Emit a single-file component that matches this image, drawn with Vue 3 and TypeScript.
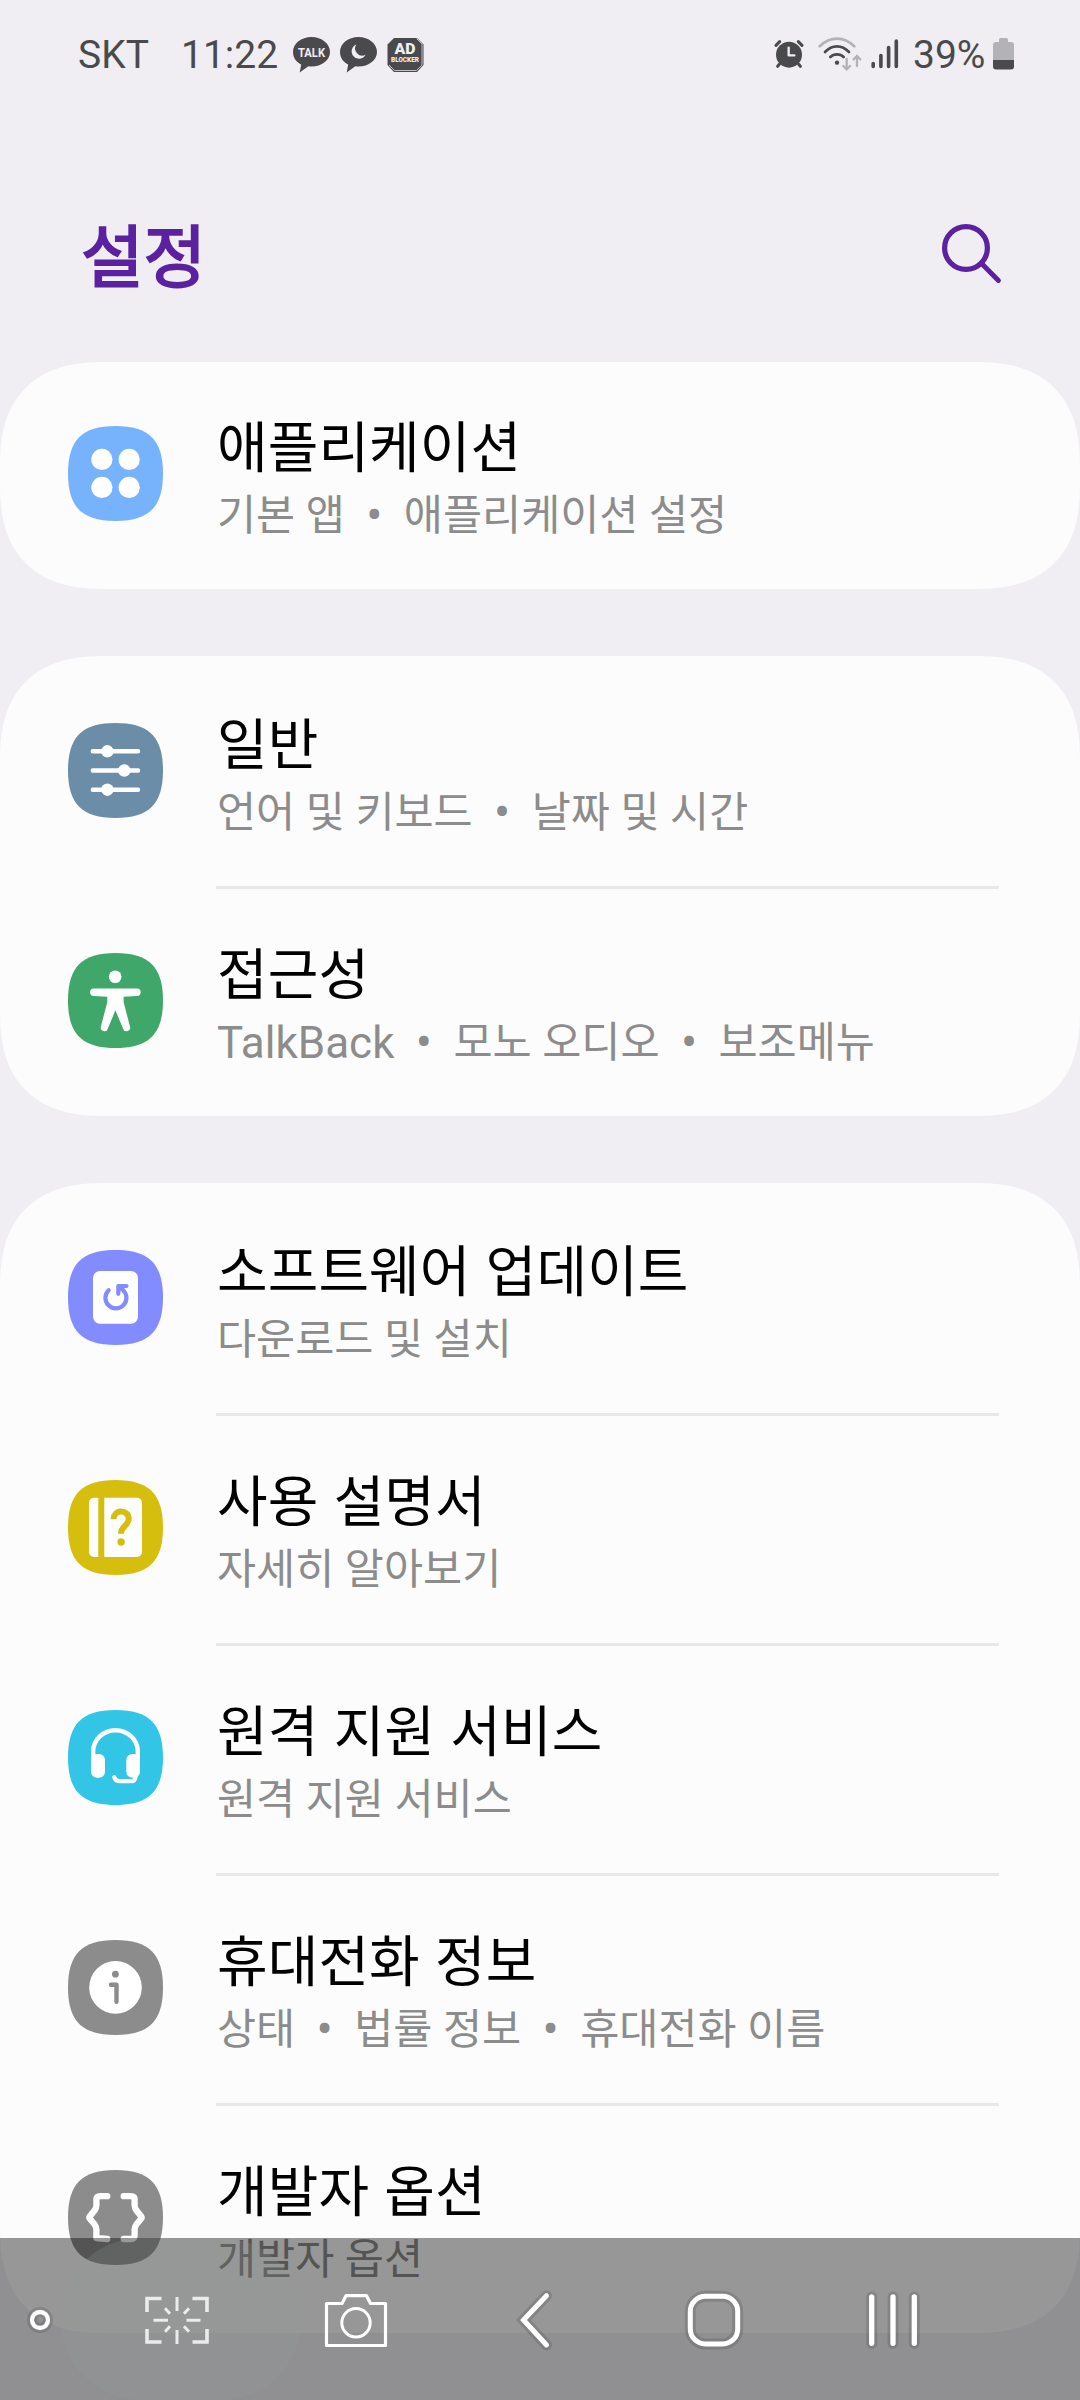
<script setup lang="ts">
type IconName =
  | 'apps' | 'general' | 'accessibility' | 'update'
  | 'manual' | 'remote' | 'about' | 'developer'

interface SettingItem {
  icon: IconName
  color: string
  title: string
  summary: string[]
}

const groups: SettingItem[][] = [
  [
    { icon: 'apps', color: '#77b2fc', title: '애플리케이션', summary: ['기본 앱', '애플리케이션 설정'] },
  ],
  [
    { icon: 'general', color: '#6b8da8', title: '일반', summary: ['언어 및 키보드', '날짜 및 시간'] },
    { icon: 'accessibility', color: '#3fa769', title: '접근성', summary: ['TalkBack', '모노 오디오', '보조메뉴'] },
  ],
  [
    { icon: 'update', color: '#838cff', title: '소프트웨어 업데이트', summary: ['다운로드 및 설치'] },
    { icon: 'manual', color: '#d5be0d', title: '사용 설명서', summary: ['자세히 알아보기'] },
    { icon: 'remote', color: '#32c5e6', title: '원격 지원 서비스', summary: ['원격 지원 서비스'] },
    { icon: 'about', color: '#8c8c8c', title: '휴대전화 정보', summary: ['상태', '법률 정보', '휴대전화 이름'] },
    { icon: 'developer', color: '#8c8c8c', title: '개발자 옵션', summary: ['개발자 옵션'] },
  ],
]

const isLatin = (text: string): boolean => /^[A-Za-z]+$/.test(text)
</script>

<template>
  <div class="screen">
    <header class="status">
      <span class="carrier">SKT</span>
      <span class="clock">11:22</span>
      <svg class="note" width="37" height="36" viewBox="0 0 37 36">
        <path d="M18.500 0C8.300 0 0 6.600 0 15c0 5.500 3.200 10 8.200 12.600L6.700 35.500l8.600-6.200c1 .1 2.100.2 3.200.2C28.700 29.500 37 23.300 37 15S28.700 0 18.500 0z" fill="#4a4a4c" />
        <text x="18.500" y="19.800" text-anchor="middle" textLength="27" lengthAdjust="spacingAndGlyphs" class="talk">TALK</text>
      </svg>
      <svg class="note" width="37" height="36" viewBox="0 0 37 36">
        <path d="M18.500 0C8.300 0 0 6.600 0 15c0 5.500 3.200 10 8.200 12.600L6.700 35.500l8.600-6.200c1 .1 2.100.2 3.200.2C28.700 29.500 37 23.300 37 15S28.700 0 18.500 0z" fill="#4a4a4c" />
        <path d="M16.300 7.500a7.200 7.200 0 0 0 9.300 10.300A7.400 7.400 0 1 1 16.300 7.500z" fill="#f0eef3" />
      </svg>
      <svg class="note" width="37" height="36" viewBox="0 0 37 36">
        <path d="M7 1h23l6.500 6.500v20.500L30 35H7L.5 28V7.500z" fill="#4a4a4c" />
        <path d="M29.500 1.500L35 7v21l-5.500 5.500h-22L2 28" fill="none" stroke="#cfcdd2" stroke-width="0.9" />
        <text x="18" y="17.300" text-anchor="middle" textLength="21" lengthAdjust="spacingAndGlyphs" class="ad">AD</text>
        <text x="18" y="25.300" text-anchor="middle" textLength="28" lengthAdjust="spacingAndGlyphs" class="blocker">BLOCKER</text>
      </svg>
      <span class="grow"></span>
      <svg width="30" height="30" viewBox="0 0 90 90" class="alarm">
        <g fill="none" stroke="#4a4a4c" stroke-linecap="round" stroke-width="9">
          <path d="M6 19L17 8M73 8l11 11M16 76l-5 6M74 76l5 6" />
        </g>
        <circle cx="45" cy="47" r="39" fill="#4a4a4c" />
        <path d="M44 26v23h17" fill="none" stroke="#f0eef3" stroke-width="7" stroke-linecap="round" stroke-linejoin="round" />
      </svg>
      <svg width="44" height="36" viewBox="205 47 132 108" class="wifi">
        <g fill="none" stroke-width="8" stroke-linecap="round">
          <path d="M210 78Q234 55 262 55T314 78" stroke="#b3b2b7" />
          <path d="M226 95Q242 78 262 78T298 95" stroke="#4a4a4c" />
          <path d="M242 110Q250 102 262 102T282 110" stroke="#4a4a4c" />
          <path d="M291 116v30M281 137l10 10 10-10M322 137v-30M312 117l10-10 10 10" stroke="#b3b2b7" stroke-width="7" />
        </g>
        <circle cx="262" cy="127" r="6.500" fill="#4a4a4c" />
      </svg>
      <svg width="28" height="30" viewBox="0 0 28 30" class="signal">
        <path d="M2.200 24.500v3M9.900 16.500v11M17.600 8.500v19M25.300 2v25.500" stroke="#4a4a4c" stroke-width="3.600" stroke-linecap="round" />
      </svg>
      <span class="percent">39%</span>
      <svg width="21" height="32" viewBox="0 0 21 32" class="battery">
        <path d="M6 4V1.500Q6 0 7.500 0h6Q15 0 15 1.500V4h3q3 0 3 3v15H0V7q0-3 3-3z" fill="#b3b2b7" />
        <path d="M0 22h21v6.500q0 3-3 3H3q-3 0-3-3z" fill="#4a4a4c" />
      </svg>
    </header>

    <div class="appbar">
      <h1>설정</h1>
      <svg width="60" height="60" viewBox="0 0 60 60" fill="none" stroke="#5b21a0">
        <circle cx="24" cy="24" r="21.400" stroke-width="5.200" />
        <path d="M39.600 39.600L56.400 56.400" stroke-width="5" stroke-linecap="round" />
      </svg>
    </div>

    <main>
      <section v-for="(group, g) in groups" :key="g" class="card">
        <div v-for="item in group" :key="item.title" class="row">
          <svg class="icon" width="95" height="95" viewBox="0 0 95 95">
            <path
              d="M47.500 0C81 0 95 14 95 47.500S81 95 47.500 95 0 81 0 47.500 14 0 47.500 0z"
              :fill="item.color"
            />
            <g v-if="item.icon === 'apps'" fill="#fff">
              <circle cx="33.900" cy="33.400" r="10.600" />
              <circle cx="61.200" cy="33.400" r="10.600" />
              <circle cx="33.900" cy="61.400" r="10.600" />
              <circle cx="61.200" cy="61.400" r="10.600" />
            </g>
            <g v-else-if="item.icon === 'general'" fill="#fff">
              <path d="M24.800 28.300h45.200M24.800 47.500h45.200M24.800 66.700h45.200" stroke="#fff" stroke-width="4.500" stroke-linecap="round" />
              <circle cx="39.400" cy="28.300" r="6.200" />
              <circle cx="56.300" cy="47.500" r="6.200" />
              <circle cx="39.400" cy="66.700" r="6.200" />
            </g>
            <g v-else-if="item.icon === 'accessibility'" fill="#fff">
              <circle cx="47.200" cy="23.700" r="6.300" />
              <path d="M25.800 35.600H69a3.700 3.700 0 0 1 0 7.400L55.600 43.800V49L62 73.600a3.600 3.600 0 0 1-7 2L47.400 57.300 39.900 75.600a3.600 3.600 0 0 1-7-2L39.300 49v-5.200L25.800 43a3.700 3.700 0 0 1 0-7.400z" />
            </g>
            <g v-else-if="item.icon === 'update'">
              <rect x="25" y="21" width="45" height="52.700" rx="7" fill="#fff" />
              <g fill="none" :stroke="item.color" stroke-width="4.200" stroke-linecap="round" stroke-linejoin="round">
                <path d="M40.700 40.200A10.500 10.500 0 1 0 55.500 40.600" />
                <path d="M50.300 43.800V36h8.200" />
              </g>
              <path d="M50.300 36h9l-3 2.500-3.500 3.500z" :fill="item.color" />
            </g>
            <g v-else-if="item.icon === 'manual'">
              <path d="M30.300 17.700v59.300H26a5 5 0 0 1-5-5V22.700a5 5 0 0 1 5-5zM36.300 17.700h32.700a5 5 0 0 1 5 5V72a5 5 0 0 1-5 5H36.300z" fill="#fff" />
              <path d="M45.500 39.200a7.600 7.600 0 0 1 15.300-.3c0 6.600-7.800 7-7.800 14.800" fill="none" :stroke="item.color" stroke-width="6" />
              <circle cx="53.100" cy="62" r="3.700" :fill="item.color" />
            </g>
            <g v-else-if="item.icon === 'remote'" fill="none" stroke="#fff">
              <path d="M25.200 52V41.500a22.300 21.300 0 0 1 44.600 0V52" stroke-width="4.400" />
              <rect x="23" y="44" width="14" height="23.800" rx="6" fill="#fff" stroke="none" />
              <rect x="58.300" y="44" width="13.700" height="23.800" rx="6" fill="#fff" stroke="none" />
              <path d="M46.300 67.300q1.200 3.800 5 3.800h13q2.800 0 3.400-5.600" stroke-width="4.300" stroke-linecap="round" />
            </g>
            <g v-else-if="item.icon === 'about'">
              <circle cx="47.500" cy="47.400" r="26.300" fill="#fff" />
              <circle cx="47.400" cy="34.200" r="3.400" :fill="item.color" />
              <path d="M43 44.700h5.500v17" fill="none" :stroke="item.color" stroke-width="4.400" stroke-linecap="round" stroke-linejoin="round" />
            </g>
            <g v-else fill="none" stroke="#fff" stroke-width="6.300" stroke-linecap="round" stroke-linejoin="round">
              <path d="M39.300 26.200H32q-3.600 0-3.600 3.500v5.500q0 2.500-1.700 5L21.700 46.500q-.7 1 0 2L26.700 54.500q1.700 2.500 1.700 5v8.500l10.900 1" />
              <path d="M55.700 26.200H63q3.600 0 3.600 3.500v5.500q0 2.500 1.700 5l5 6.300q.7 1 0 2l-5 6q-1.700 2.500-1.700 5V65.500q0 3.500-3.600 3.500H55.700" />
            </g>
          </svg>
          <div class="text">
            <div class="title">{{ item.title }}</div>
            <div class="summary">
              <template v-for="(part, i) in item.summary" :key="part">
                <span v-if="i > 0" class="dot">•</span><span :class="{ latin: isLatin(part) }">{{ part }}</span>
              </template>
            </div>
          </div>
        </div>
      </section>
    </main>

    <nav class="navbar">
      <div class="ripple"></div>
      <div class="nav-first">
        <svg width="40" height="40" viewBox="-20 -20 40 40" fill="none">
          <circle r="8" stroke="#000" stroke-opacity="0.12" stroke-width="10" />
          <circle r="8" stroke="#fff" stroke-width="4.300" />
        </svg>
      </div>
      <div class="nav-item">
        <svg width="80" height="80" viewBox="-40 -40 80 80" fill="none" stroke="#fff">
          <path d="M-30-8V-21.500H-15.500M15.500-21.500H30V-8M30 9V22H15.500M-15.500 22H-30V9" stroke-width="3.600" />
          <path d="M0-23v14M0 10v14M-23.500.3h14.500M9.500.3h14" stroke-width="3" />
          <path d="M-12-11.700l5 5.500M12-11.700l-5 5.500M-12 11.700l5-5.500M12 11.700l-5-5.500" stroke-width="3" />
        </svg>
      </div>
      <div class="nav-item">
        <svg width="80" height="80" viewBox="-40 -40 80 80" fill="none" stroke="#fff" stroke-linejoin="round">
          <path d="M-29-16.500H-14L-10-24.300H10.500L14.500-16.500H29.500V25.500H-29.500V-16.500z" stroke-width="3.200" />
          <circle cx="0" cy="2.800" r="14.200" stroke-width="3" />
        </svg>
      </div>
      <div class="nav-item">
        <svg width="80" height="80" viewBox="-40 -40 80 80" fill="none" stroke-linecap="round">
          <path d="M11.500-24.300L-11.500 0 11.500 25" stroke="#000" stroke-opacity="0.12" stroke-width="11" />
          <path d="M11.500-24.300L-11.500 0 11.500 25" stroke="#fff" stroke-width="5" />
        </svg>
      </div>
      <div class="nav-item">
        <svg width="80" height="80" viewBox="-40 -40 80 80" fill="none">
          <rect x="-23.700" y="-23.700" width="47.400" height="47.600" rx="15" stroke="#000" stroke-opacity="0.12" stroke-width="11" />
          <rect x="-23.700" y="-23.700" width="47.400" height="47.600" rx="15" stroke="#fff" stroke-width="5" />
        </svg>
      </div>
      <div class="nav-item">
        <svg width="80" height="80" viewBox="-40 -40 80 80" fill="none" stroke-linecap="round">
          <path d="M-21.300-23v46.300M0-23v46.300M21.300-23v46.300" stroke="#000" stroke-opacity="0.12" stroke-width="11" />
          <path d="M-21.300-23v46.300M0-23v46.300M21.300-23v46.300" stroke="#fff" stroke-width="5.300" />
        </svg>
      </div>
    </nav>
  </div>
</template>

<style>
body {
  background: #f0eef3;
}
</style>

<style scoped>
.screen {
  position: relative;
  width: 1080px;
  height: 2400px;
  overflow: hidden;
  background: #f0eef3;
  font-family: Roboto, "Noto Sans CJK KR", sans-serif;
}

.status {
  display: flex;
  align-items: center;
  height: 108px;
  padding: 0 66px 0 78px;
  box-sizing: border-box;
  color: #4a4a4c;
  font-size: 39px;
  line-height: 108px;
}

.carrier {
  width: 103px;
  padding-top: 2px;
}

.clock {
  width: 112px;
  padding-top: 2px;
}

.note {
  margin-top: 1px;
  margin-right: 10px;
}

.grow {
  flex: 1;
}

.talk {
  font: 700 12px Roboto, sans-serif;
  fill: #f0eef3;
}

.ad {
  font: 900 15px Roboto, sans-serif;
  fill: #f0eef3;
}

.blocker {
  font: 900 7.5px Roboto, sans-serif;
  fill: #f0eef3;
}

.wifi {
  margin-left: 14px;
}

.signal {
  margin-left: 9px;
}

.percent {
  width: 80px;
  padding: 2px 0 0 14px;
  box-sizing: border-box;
}

.battery {
  margin-left: 14px;
}

.appbar {
  display: flex;
  justify-content: space-between;
  height: 254px;
  padding: 0 78px 0 81px;
  box-sizing: border-box;
}

.appbar svg {
  margin-top: 116px;
}

h1 {
  margin: 101px 0 0;
  color: #5b21a0;
  font-size: 68px;
  font-weight: 400;
  -webkit-text-stroke: 2px #5b21a0;
  line-height: 100px;
}

.card {
  margin-bottom: 67px;
  border-radius: 88px;
  background: #fcfcfc;
  overflow: hidden;
}

@supports (corner-shape: squircle) {
  .card {
    border-radius: 105px;
    corner-shape: superellipse(1.3);
  }
}

.card:first-child .row {
  margin-top: -3px;
}

.row {
  display: flex;
  align-items: flex-start;
  height: 230px;
  padding: 0 81px 0 68px;
}

.icon {
  flex: none;
  margin: 67px 53px 0 0;
}

.text {
  flex: 1;
  height: 230px;
  padding: 54px 0 0 1px;
  box-sizing: border-box;
  white-space: nowrap;
}

.row + .row .text {
  padding-top: 51px;
  border-top: 3px solid #e8e8e8;
}

.title {
  color: #000;
  font-size: 55px;
  line-height: 70px;
  letter-spacing: 0.1px;
  word-spacing: 1.5px;
}

.summary {
  display: flex;
  color: #8c8c8c;
  font-size: 42.5px;
  line-height: 66px;
}

.latin {
  font-size: 44px;
}

.dot {
  width: 59px;
  text-align: center;
  font-size: 48px;
}

.navbar {
  position: absolute;
  left: 0;
  bottom: 0;
  display: flex;
  align-items: center;
  width: 1080px;
  height: 162px;
  padding-top: 2px;
  box-sizing: border-box;
  background: rgba(0, 0, 0, 0.4);
}

.ripple {
  position: absolute;
  left: 60px;
  top: 0;
  width: 242px;
  height: 162px;
  border-radius: 81px;
  background: rgba(152, 160, 155, 0.2);
}

.nav-first {
  display: flex;
  justify-content: center;
  width: 80px;
  margin-right: 8px;
}

.nav-item {
  display: flex;
  justify-content: center;
  width: 178.800px;
}

svg {
  display: block;
  flex: none;
}
</style>
